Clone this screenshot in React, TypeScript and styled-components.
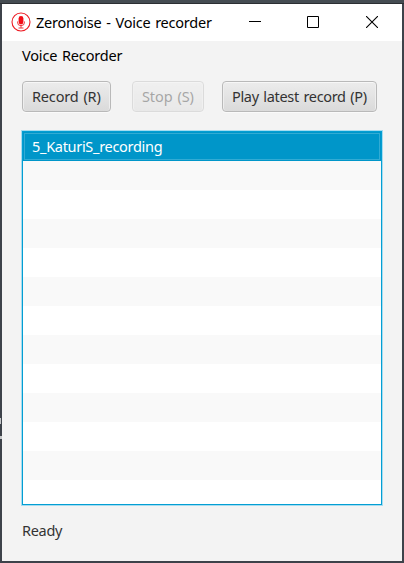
import React from "react";
import styled, { createGlobalStyle } from "styled-components";

const GlobalStyle = createGlobalStyle`
  html, body { margin: 0; padding: 0; }
  body { background: #40464d; overflow: hidden; }
  * { box-sizing: border-box; }
`;

const Desktop = styled.div`
  width: 404px;
  height: 563px;
  padding: 4px 2px 2px;
  background: linear-gradient(#454c52 0 3px, #2b2e32 3px 4px, #3d424a 4px);
  font-family: "Noto Sans", "Open Sans", sans-serif;
  font-size: 14.5px;
  line-height: 20px;
  color: #333;
  position: relative;
`;

const DesktopGlyph = styled.svg`
  position: absolute;
  left: 0;
  top: 416px;
`;

const Window = styled.main`
  width: 400px;
  height: 557px;
  display: flex;
  flex-direction: column;
  background: #f3f3f3;
`;

const TitleBar = styled.header`
  height: 37px;
  display: flex;
  align-items: center;
  padding: 0 1px 2px 9px;
  background: #fff;
  color: #000;
`;

const Label = styled.span<{ $spacing?: number; $words?: number }>`
  display: block;
  white-space: pre;
  letter-spacing: ${(p) => p.$spacing ?? -0.3}px;
  word-spacing: ${(p) => p.$words ?? 0}px;
`;

const AppIcon = styled.svg`
  margin: 1px 5px 0 0;
  flex: none;
`;

const Controls = styled.div`
  display: flex;
  margin-left: auto;
`;

const Control = styled.div`
  width: 58.5px;
  height: 35px;
  display: flex;
  align-items: center;
  justify-content: center;
`;

const Content = styled.section`
  display: flex;
  flex-direction: column;
  padding: 4px 20px 0;
`;

const Heading = styled.div`
  height: 36px;
  color: #000;
`;

const Toolbar = styled.div`
  display: flex;
  height: 50px;
`;

const Button = styled.button<{ $width: number; $gap?: number }>`
  width: ${(p) => p.$width}px;
  height: 31px;
  margin: 0 ${(p) => p.$gap ?? 0}px 0 0;
  padding: 0 0 2px 9px;
  text-align: left;
  font: inherit;
  color: #333;
  border: 1px solid #b9b9b9;
  border-radius: 4px;
  background: linear-gradient(#ececec, #dadada);
  box-shadow: inset 0 1px 0 #f7f7f7, inset 1px 0 0 #eee, inset -1px 0 0 #eee, 0 1px 0 #fafafa;
  &:disabled {
    opacity: 0.4;
  }
`;

const List = styled.div`
  height: 374px;
  border: 1px solid #039ed3;
  box-shadow: 0 0 0 1px #a5dcf0;
  background: #fff;
  overflow: hidden;
`;

const Row = styled.div<{ $selected?: boolean; $odd?: boolean }>`
  height: ${(p) => (p.$selected ? 27 : 29)}px;
  padding: ${(p) => (p.$selected ? "2px 7px" : "0 9px")};
  color: #fff;
  background: ${(p) => (p.$selected ? "#0096c9" : p.$odd ? "#f9f9f9" : "#fff")};
  border: ${(p) => (p.$selected ? "1px solid #32abd4" : "0")};
  box-shadow: ${(p) => (p.$selected ? "0 0 0 1px #0096c9" : "none")};
  margin: ${(p) => (p.$selected ? "1px 1px" : "0")};
`;

const Rows = styled.div`
  display: flex;
  flex-direction: column;
`;

const Status = styled.footer`
  margin-top: 15px;
`;

const rows = Array.from({ length: 12 }, (_, i) => i);

export default function App() {
  return (
    <>
      <GlobalStyle />
      <Desktop>
        <Window>
          <TitleBar>
            <AppIcon width="20" height="20" viewBox="0 0 20 20" fill="none">
              <circle cx="10" cy="10" r="9" stroke="#ed1c24" strokeWidth="1.1" />
              <rect x="7.6" y="4" width="4.8" height="8.4" rx="2.4" fill="#f20d17" />
              <path d="M6.5 9.5v.7a3.5 3.5 0 0 0 7 0v-.7M10 14v1.8M7.5 16h5" stroke="#ed1c24" strokeWidth=".9" />
            </AppIcon>
            <Label $spacing={-0.24} $words={1.3}>Zeronoise - Voice recorder</Label>
            <Controls>
              <Control>
                <svg width="12" height="12"><path d="M0 5.5h12" stroke="#000" /></svg>
              </Control>
              <Control>
                <svg width="12" height="12"><path d="M.5.5h11v11H.5z" fill="none" stroke="#000" /></svg>
              </Control>
              <Control>
                <svg width="12" height="12"><path d="M0 0l12 12M12 0L0 12" stroke="#000" strokeWidth="1.1" /></svg>
              </Control>
            </Controls>
          </TitleBar>
          <Content>
            <Heading><Label $spacing={-0.17} $words={1.2}>Voice Recorder</Label></Heading>
            <Toolbar>
              <Button $width={89} $gap={21}><Label $spacing={-0.17} $words={1.3}>Record (R)</Label></Button>
              <Button $width={72} $gap={18} disabled><Label $spacing={-0.1} $words={1.3}>Stop (S)</Label></Button>
              <Button $width={155}><Label $spacing={-0.32} $words={1.1}>Play latest record (P)</Label></Button>
            </Toolbar>
            <List>
              <Rows>
                <Row $selected><Label>5_KaturiS_recording</Label></Row>
                {rows.map((i) => <Row key={i} $odd={i % 2 === 0} />)}
              </Rows>
            </List>
            <Status><Label>Ready</Label></Status>
          </Content>
        </Window>
        <DesktopGlyph width="2" height="26">
          <path d="M0 2h1v6H0zM0 20h2v3H0z" fill="#c5c7c9" />
        </DesktopGlyph>
      </Desktop>
    </>
  );
}
